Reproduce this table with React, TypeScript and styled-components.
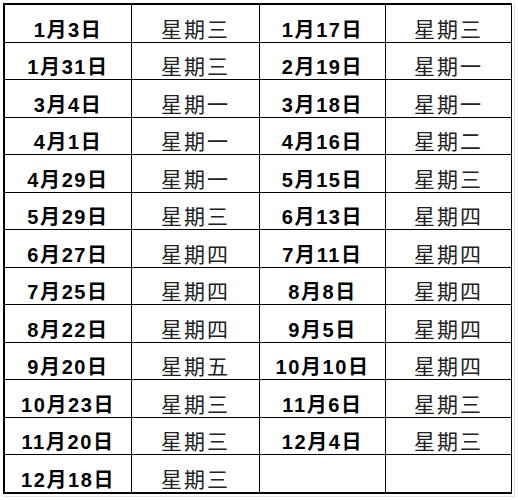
import React from 'react';
import styled, { createGlobalStyle } from 'styled-components';

const GlobalStyle = createGlobalStyle`
  html, body {
    margin: 0;
    padding: 0;
    background: #fff;
  }
`;

const Page = styled.div`
  width: 518px;
  height: 500px;
  box-sizing: border-box;
  padding: 3px 0 0 3px;
  background: #fff;
`;

const Sheet = styled.div`
  width: 512px;
  height: 494px;
  box-sizing: border-box;
  border-right: 1px solid #e2e2e2;
  border-bottom: 1px solid #e2e2e2;
`;

const Grid = styled.div`
  display: grid;
  grid-template-columns: 126px 127px 125px 125px;
  grid-template-rows: repeat(13, 1fr);
  gap: 1px;
  width: 509px;
  height: 491px;
  box-sizing: border-box;
  border: 2px solid #000;
  background: #000;
`;

const Cell = styled.div<{ $bold?: boolean }>`
  display: flex;
  align-items: flex-end;
  justify-content: center;
  background: #fff;
  padding-bottom: 0;
  font-family: 'Liberation Sans', 'Noto Sans CJK SC', sans-serif;
  font-size: ${(p) => (p.$bold ? '20px' : '21px')};
  line-height: 24px;
  letter-spacing: ${(p) => (p.$bold ? '1.6px' : '2px')};
  font-weight: ${(p) => (p.$bold ? 700 : 400)};
  color: ${(p) => (p.$bold ? '#000' : '#222')};
  white-space: nowrap;
`;

const rows: [string, string, string, string][] = [
  ['1月3日', '星期三', '1月17日', '星期三'],
  ['1月31日', '星期三', '2月19日', '星期一'],
  ['3月4日', '星期一', '3月18日', '星期一'],
  ['4月1日', '星期一', '4月16日', '星期二'],
  ['4月29日', '星期一', '5月15日', '星期三'],
  ['5月29日', '星期三', '6月13日', '星期四'],
  ['6月27日', '星期四', '7月11日', '星期四'],
  ['7月25日', '星期四', '8月8日', '星期四'],
  ['8月22日', '星期四', '9月5日', '星期四'],
  ['9月20日', '星期五', '10月10日', '星期四'],
  ['10月23日', '星期三', '11月6日', '星期三'],
  ['11月20日', '星期三', '12月4日', '星期三'],
  ['12月18日', '星期三', '', ''],
];

const App: React.FC = () => (
  <Page>
    <GlobalStyle />
    <Sheet>
      <Grid>
        {rows.map((r, i) => (
          <React.Fragment key={i}>
            <Cell $bold>{r[0]}</Cell>
            <Cell>{r[1]}</Cell>
            <Cell $bold>{r[2]}</Cell>
            <Cell>{r[3]}</Cell>
          </React.Fragment>
        ))}
      </Grid>
    </Sheet>
  </Page>
);

export default App;
